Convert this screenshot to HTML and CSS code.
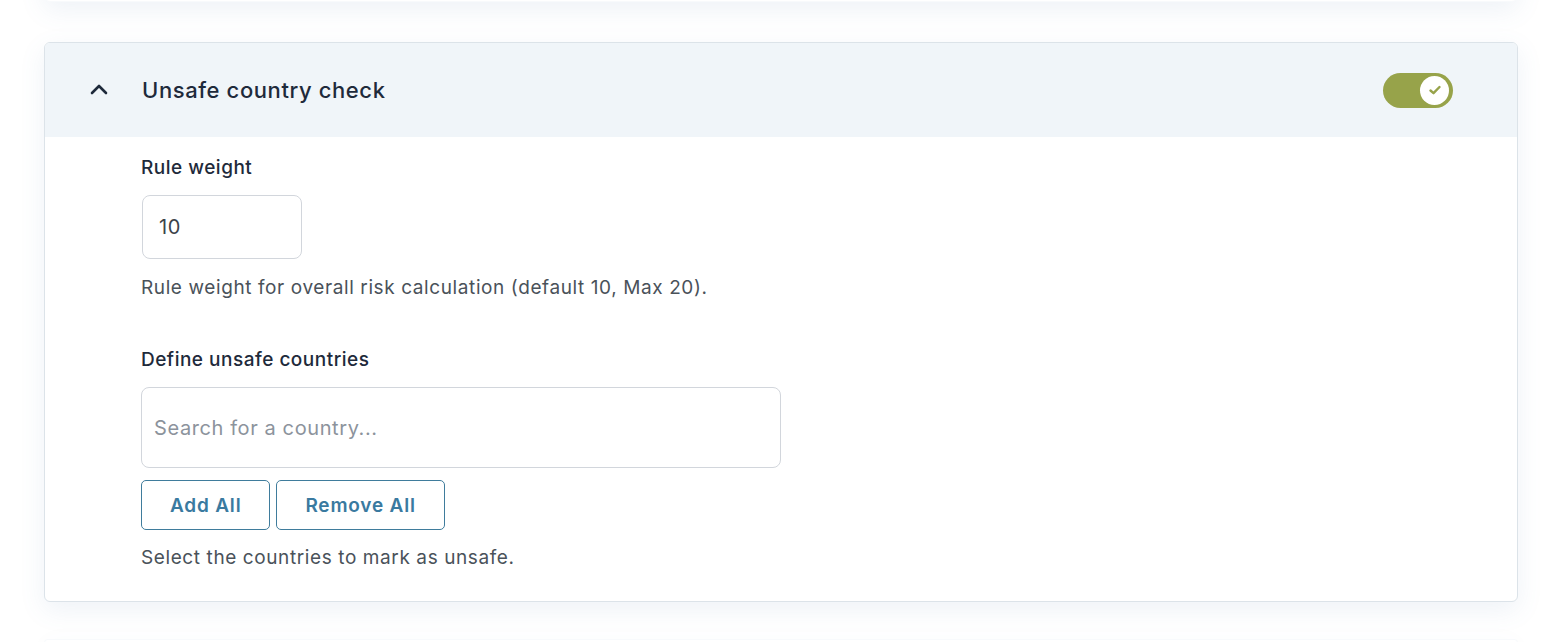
FILE: index.html
```html
<!DOCTYPE html>
<html lang="en">
<head>
<meta charset="utf-8">
<title>Unsafe country check</title>
<link rel="stylesheet" href="styles.css">
</head>
<body>
<div class="page">
  <div class="card card-prev"></div>
  <section class="card">
    <header class="card-head">
      <svg class="chevron" width="20" height="14" viewBox="0 0 20 14" aria-hidden="true">
        <path d="M3 11 L10 4 L17 11" fill="none" stroke="#1e2a3b" stroke-width="2.6" stroke-linecap="round" stroke-linejoin="round"/>
      </svg>
      <h2 class="card-title">Unsafe country check</h2>
      <span class="toggle">
        <span class="knob">
          <svg width="14" height="12" viewBox="0 0 14 12" aria-hidden="true">
            <path d="M2.5 6.5 L5.5 9.2 L11.5 3" fill="none" stroke="#97a34a" stroke-width="2.4" stroke-linecap="round" stroke-linejoin="round"/>
          </svg>
        </span>
      </span>
    </header>
    <div class="card-body">
      <div class="field">
        <label class="label">Rule weight</label>
        <div class="input small">10</div>
        <p class="help">Rule weight for overall risk calculation (default 10, Max 20).</p>
      </div>
      <div class="field">
        <label class="label">Define unsafe countries</label>
        <div class="input search"><span class="placeholder">Search for a country...</span></div>
        <div class="buttons">
          <button class="btn">Add All</button>
          <button class="btn">Remove All</button>
        </div>
        <p class="help">Select the countries to mark as unsafe.</p>
      </div>
    </div>
  </section>
  <div class="card card-next"></div>
</div>
</body>
</html>
```
FILE: styles.css
```css
* { box-sizing: border-box; }
html, body { margin: 0; padding: 0; background: #ffffff; }
body {
  font-family: Inter, "Open Sans", "Liberation Sans", sans-serif;
  color: #1e2a3b;
  overflow: hidden;
  height: 642px;
}
.page {
  padding: 0 44px;
  display: flex;
  flex-direction: column;
}
.card {
  background: #fff;
  border: 1px solid #dce3e9;
  border-radius: 6px;
  box-shadow: 0 8px 26px rgba(90, 130, 180, 0.10);
  overflow: hidden;
}
.card-prev {
  height: 60px;
  margin-top: -58px;
  margin-bottom: 40px;
  border-color: #f8fafc;
}
.card-next {
  height: 4px;
  margin-top: 37px;
  border-color: #f8fafc;
  border-bottom: 0;
  border-radius: 6px 6px 0 0;
}
.card-head {
  height: 94px;
  background: #f0f5f9;
  display: flex;
  align-items: center;
  padding: 0 64px 0 44px;
}
.chevron { margin-right: 33px; margin-top: -2px; }
.card-title {
  margin: 0;
  font-size: 22px;
  font-weight: 500;
  letter-spacing: 0.6px;
  flex: 1;
}
.toggle {
  width: 70px;
  height: 35px;
  border-radius: 18px;
  background: #97a34a;
  display: flex;
  align-items: center;
  justify-content: flex-end;
  padding-right: 4px;
}
.knob {
  width: 29px;
  height: 29px;
  border-radius: 50%;
  background: #fff;
  display: flex;
  align-items: center;
  justify-content: center;
}
.card-body {
  padding: 19px 96px 32px 96px;
}
.field + .field { margin-top: 49px; }
.label {
  display: block;
  font-size: 19px;
  font-weight: 500;
  letter-spacing: 0.5px;
  color: #1e2a3b;
  margin-bottom: 16px;
}
.input {
  border: 1px solid #d2d6dc;
  border-radius: 8px;
  background: #fff;
  display: flex;
  align-items: center;
  font-size: 20px;
  letter-spacing: 0.6px;
  color: #3c434a;
}
.input.small {
  width: 160px;
  height: 64px;
  padding-left: 16px;
  margin-left: 1px;
}
.input.search {
  width: 640px;
  height: 81px;
  padding-left: 12px;
}
.placeholder { color: #8c939c; }
.help {
  margin: 17px 0 0;
  font-size: 19px;
  letter-spacing: 0.6px;
  color: #4a525a;
}
.buttons {
  display: flex;
  gap: 6px;
  margin-top: 12px;
}
.buttons + .help { margin-top: 16px; }
.btn {
  font-family: inherit;
  height: 50px;
  padding: 0 28px;
  background: #fff;
  border: 1px solid #3f7c9c;
  border-radius: 5px;
  color: #3a7aa0;
  font-size: 19px;
  font-weight: 600;
  letter-spacing: 0.8px;
}
```
